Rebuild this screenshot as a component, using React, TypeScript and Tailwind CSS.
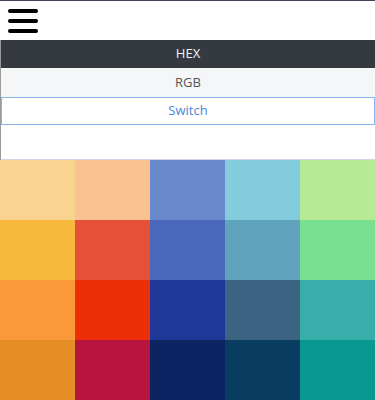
const rows: string[][] = [
  ["#fad390", "#f8c291", "#6a89cc", "#82ccdd", "#b8e994"],
  ["#f6b93b", "#e55039", "#4a69bd", "#60a3bc", "#78e08f"],
  ["#fa983a", "#eb2f06", "#1e3799", "#3c6382", "#38ada9"],
  ["#e58e26", "#b71540", "#0c2461", "#0a3d62", "#079992"],
];

export default function App() {
  return (
    <div className="w-[375px] h-[400px] overflow-hidden bg-white border-t border-[#4b3f5e] font-['Open_Sans',sans-serif] text-[13px]">
      {/* header */}
      <div className="h-[39px] flex items-center pl-2">
        <button className="flex flex-col gap-[6px]">
          <span className="block w-[30px] h-[4px] rounded-full bg-black" />
          <span className="block w-[30px] h-[4px] rounded-full bg-black" />
          <span className="block w-[30px] h-[4px] rounded-full bg-black" />
        </button>
      </div>

      {/* format tabs */}
      <div className="border-l border-[#9a9a9a]">
        <div className="h-[28px] flex items-center justify-center bg-[#343a40] text-[#f1f1f1]">HEX</div>
        <div className="h-[29px] flex items-center justify-center bg-[#f5f6f8] text-[#555]">RGB</div>
        <button className="w-full h-[28px] flex items-center justify-center bg-white border border-[#8ab4ec] text-[#4a86d8]">
          Switch
        </button>
        <div className="h-[35px] border-b border-[#d6d4e4]" />
      </div>

      {/* swatches */}
      <div className="grid grid-cols-5">
        {rows.flat().map((c) => (
          <div key={c} className="h-[60px]" style={{ backgroundColor: c }} />
        ))}
      </div>
    </div>
  );
}
